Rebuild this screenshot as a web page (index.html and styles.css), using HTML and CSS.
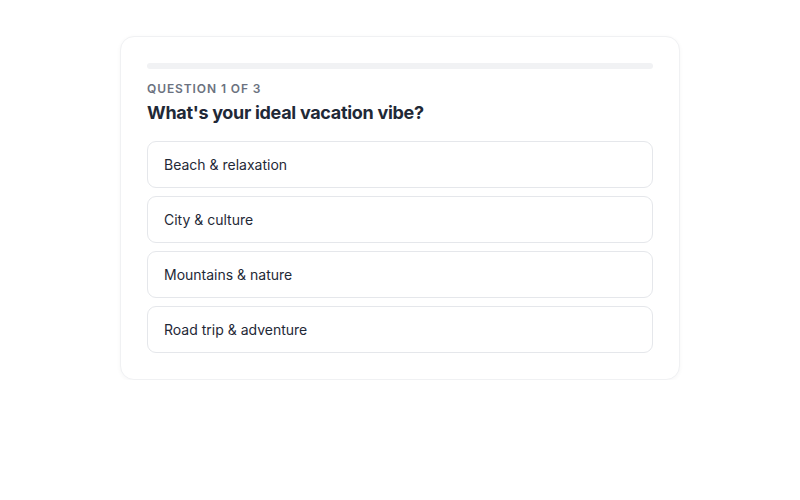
FILE: index.html
```html
<!DOCTYPE html>
<html lang="en">
<head>
<meta charset="utf-8">
<title>Quiz</title>
<link rel="stylesheet" href="styles.css">
</head>
<body>
<main class="page">
  <section class="card">
    <div class="progress"><div class="progress-fill" style="width:0%"></div></div>
    <p class="label">Question 1 of 3</p>
    <h1 class="question">What's your ideal vacation vibe?</h1>
    <div class="options">
      <button class="option">Beach &amp; relaxation</button>
      <button class="option">City &amp; culture</button>
      <button class="option">Mountains &amp; nature</button>
      <button class="option">Road trip &amp; adventure</button>
    </div>
  </section>
</main>
</body>
</html>
```
FILE: styles.css
```css
* { box-sizing: border-box; }
html, body { margin: 0; padding: 0; background: #ffffff; }
body {
  font-family: Inter, "Noto Sans", sans-serif;
  color: #1f2937;
}
.page {
  display: flex;
  justify-content: center;
  padding-top: 36px;
}
.card {
  width: 560px;
  border: 1px solid #f0f1f3;
  border-radius: 14px;
  padding: 26px 26px 26px;
  background: #fff;
  box-shadow: 0 1px 4px rgba(17, 24, 39, 0.04);
}
.progress {
  height: 6px;
  border-radius: 3px;
  background: #f1f2f4;
  overflow: hidden;
}
.progress-fill { height: 100%; background: #4f46e5; }
.label {
  margin: 12px 0 0;
  font-size: 12px;
  line-height: 16px;
  font-weight: 600;
  letter-spacing: 0.9px;
  text-transform: uppercase;
  color: #6b7280;
}
.question {
  margin: 4px 0 0;
  font-size: 18px;
  line-height: 24px;
  font-weight: 700;
  letter-spacing: -0.3px;
  color: #1f2937;
}
.options {
  margin-top: 16px;
  display: flex;
  flex-direction: column;
  gap: 8px;
}
.option {
  display: block;
  width: 100%;
  height: 47px;
  text-align: left;
  padding: 0 16px;
  border: 1px solid #e5e7eb;
  border-radius: 9px;
  background: #fff;
  font-family: inherit;
  font-size: 14px;
  color: #1f2937;
  cursor: pointer;
}
```
